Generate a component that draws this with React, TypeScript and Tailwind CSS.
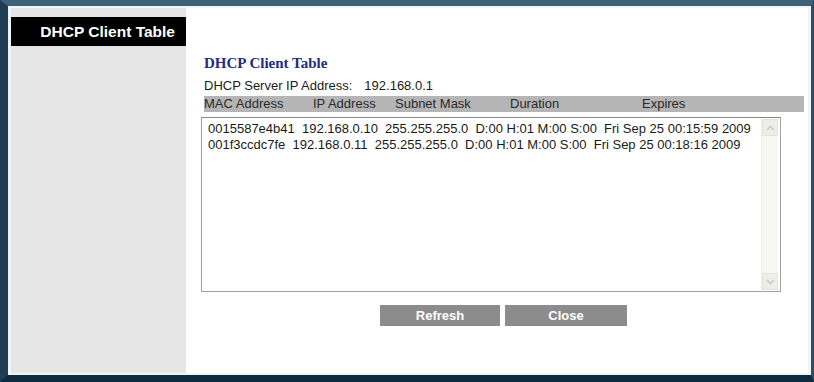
export default function App() {
  const rows = [
    "0015587e4b41  192.168.0.10  255.255.255.0  D:00 H:01 M:00 S:00  Fri Sep 25 00:15:59 2009",
    "001f3ccdc7fe  192.168.0.11  255.255.255.0  D:00 H:01 M:00 S:00  Fri Sep 25 00:18:16 2009",
  ];
  return (
    <div className="w-[814px] h-[382px] bg-[#1a3850] border-t-[6px] border-t-[#3e617a] border-l-[8px] border-l-[#1e3c54] border-r-[3px] border-r-[#2c4d64] border-b-[7px] border-b-[#0f2a3f] font-['Liberation_Sans',Arial,sans-serif]">
      <div className="flex h-full border-t-2 border-l-[3px] border-r-[3px] border-b-2 border-[#eef4f8] bg-white">
        <div className="w-[175px] bg-[#e6e6e6] pt-[9px]">
          <div className="h-[29px] bg-black flex items-center justify-end pr-[11px] text-white font-bold text-[15.5px] leading-none">
            DHCP Client Table
          </div>
        </div>
        <div className="flex-1 flex flex-col pl-[15px] pt-[47px]">
          <div className="ml-[3px] font-['Liberation_Serif',serif] font-bold text-[15px] leading-[17px] text-[#232c7f]">
            DHCP Client Table
          </div>
          <div className="ml-[3px] mt-[6px] text-[13px] leading-[15px] text-[#1a1a1a] flex">
            <span>DHCP Server IP Address:</span>
            <span className="ml-[12px]">192.168.0.1</span>
          </div>
          <div className="ml-[3px] mt-[3px] h-[16px] w-[600px] bg-[#b5b5b5] flex items-center text-[13px] text-[#2a2a2a]">
            <span className="w-[109px]">MAC Address</span>
            <span className="w-[82px]">IP Address</span>
            <span className="w-[115px]">Subnet Mask</span>
            <span className="w-[132px]">Duration</span>
            <span>Expires</span>
          </div>
          <div className="mt-[5px] h-[175px] w-[580px] border border-[#a0a0a0] border-t-[#868686] flex bg-white">
            <div className="flex-1 pl-[6px] pt-[3px] text-[13px] leading-[16px] text-[#1a1a1a] whitespace-pre">
              {rows.map((r) => (
                <div key={r}>{r}</div>
              ))}
            </div>
            <div className="w-[17px] my-[1px] mr-[2px] flex flex-col bg-[#f7f7f3] border-l border-[#f0f0ea]">
              <div className="h-[17px] bg-[#eeeee8] border border-[#e3e3dc] flex items-center justify-center">
                <svg width="9" height="6" viewBox="0 0 9 6">
                  <path d="M1 5 L4.5 1.5 L8 5" fill="none" stroke="#c4cad6" strokeWidth="1.6" />
                </svg>
              </div>
              <div className="flex-1" />
              <div className="h-[17px] bg-[#eeeee8] border border-[#e3e3dc] flex items-center justify-center">
                <svg width="9" height="6" viewBox="0 0 9 6">
                  <path d="M1 1 L4.5 4.5 L8 1" fill="none" stroke="#c4cad6" strokeWidth="1.6" />
                </svg>
              </div>
            </div>
          </div>
          <div className="mt-[13px] ml-[179px] flex gap-[5px]">
            <div className="w-[120px] h-[21px] bg-[#8c8c8c] text-white font-bold text-[13px] flex items-center justify-center">
              Refresh
            </div>
            <div className="w-[122px] h-[21px] bg-[#8c8c8c] text-white font-bold text-[13px] flex items-center justify-center">
              Close
            </div>
          </div>
        </div>
      </div>
    </div>
  );
}
